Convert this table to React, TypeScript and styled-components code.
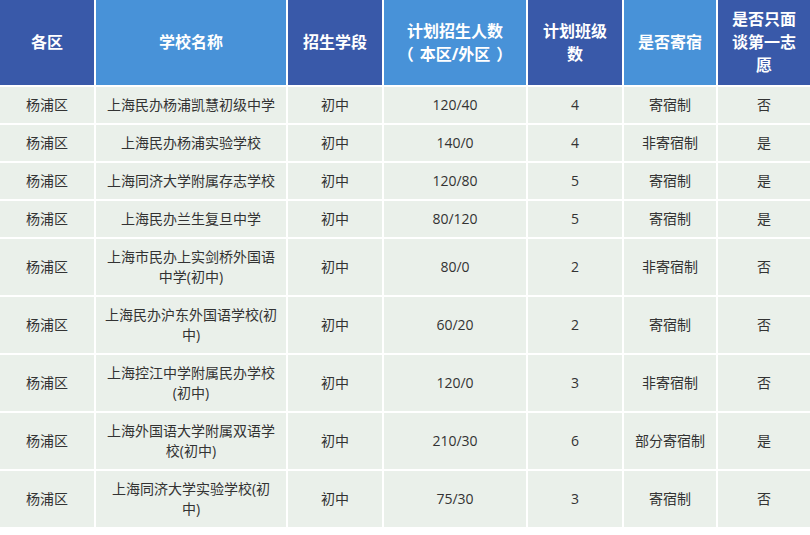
import React from 'react'
import styled, { createGlobalStyle } from 'styled-components'

const GlobalStyle = createGlobalStyle`
  body {
    margin: 0;
    background: #ffffff;
    font-family: "Open Sans", "Noto Sans CJK SC", sans-serif;
  }
`

const Table = styled.div`
  display: grid;
  grid-template-columns: 94px 190px 94px 142px 94px 92px 92px;
  gap: 2px;
  width: 810px;
  background: #ffffff;
`

const HeadCell = styled.div<{ dark?: boolean }>`
  display: flex;
  align-items: center;
  justify-content: center;
  min-height: 85px;
  box-sizing: border-box;
  padding: 8px;
  background-color: ${({ dark }) => (dark ? '#3959a9' : '#4892d8')};
  color: #ffffff;
  font-size: 16px;
  font-weight: 700;
  line-height: 23px;
  text-align: center;
`

// full-width bracket, spaced away from the words like the original font does
const Bracket = styled.span<{ side: 'open' | 'close' }>`
  display: inline-block;
  margin: ${({ side }) => (side === 'open' ? '0 6px 0 0' : '0 0 0 6px')};
`

const Cell = styled.div`
  display: flex;
  align-items: center;
  justify-content: center;
  box-sizing: border-box;
  padding: 8px;
  background-color: #eaf0ea;
  color: #333333;
  font-size: 14px;
  line-height: 20px;
  text-align: center;
`

interface School {
  name: string
  quota: string
  classes: number
  boarding: string
  interviewOnly: string
}

const headers: { label: React.ReactNode; dark: boolean }[] = [
  { label: '各区', dark: true },
  { label: '学校名称', dark: false },
  { label: '招生学段', dark: true },
  {
    label: (
      <>
        计划招生人数
        <br />
        <Bracket side="open">（</Bracket>本区/外区<Bracket side="close">）</Bracket>
      </>
    ),
    dark: false
  },
  { label: '计划班级数', dark: true },
  { label: '是否寄宿', dark: false },
  { label: '是否只面谈第一志愿', dark: true }
]

const schools: School[] = [
  { name: '上海民办杨浦凯慧初级中学', quota: '120/40', classes: 4, boarding: '寄宿制', interviewOnly: '否' },
  { name: '上海民办杨浦实验学校', quota: '140/0', classes: 4, boarding: '非寄宿制', interviewOnly: '是' },
  { name: '上海同济大学附属存志学校', quota: '120/80', classes: 5, boarding: '寄宿制', interviewOnly: '是' },
  { name: '上海民办兰生复旦中学', quota: '80/120', classes: 5, boarding: '寄宿制', interviewOnly: '是' },
  { name: '上海市民办上实剑桥外国语中学(初中)', quota: '80/0', classes: 2, boarding: '非寄宿制', interviewOnly: '否' },
  { name: '上海民办沪东外国语学校(初中)', quota: '60/20', classes: 2, boarding: '寄宿制', interviewOnly: '否' },
  { name: '上海控江中学附属民办学校(初中)', quota: '120/0', classes: 3, boarding: '非寄宿制', interviewOnly: '否' },
  { name: '上海外国语大学附属双语学校(初中)', quota: '210/30', classes: 6, boarding: '部分寄宿制', interviewOnly: '是' },
  { name: '上海同济大学实验学校(初中)', quota: '75/30', classes: 3, boarding: '寄宿制', interviewOnly: '否' }
]

export default function App() {
  return (
    <>
      <GlobalStyle />
      <Table>
        {headers.map((h, i) => (
          <HeadCell key={i} dark={h.dark}>
            <span>{h.label}</span>
          </HeadCell>
        ))}
        {schools.map(s => (
          <React.Fragment key={s.name}>
            <Cell>杨浦区</Cell>
            <Cell>{s.name}</Cell>
            <Cell>初中</Cell>
            <Cell>{s.quota}</Cell>
            <Cell>{s.classes}</Cell>
            <Cell>{s.boarding}</Cell>
            <Cell>{s.interviewOnly}</Cell>
          </React.Fragment>
        ))}
      </Table>
    </>
  )
}
